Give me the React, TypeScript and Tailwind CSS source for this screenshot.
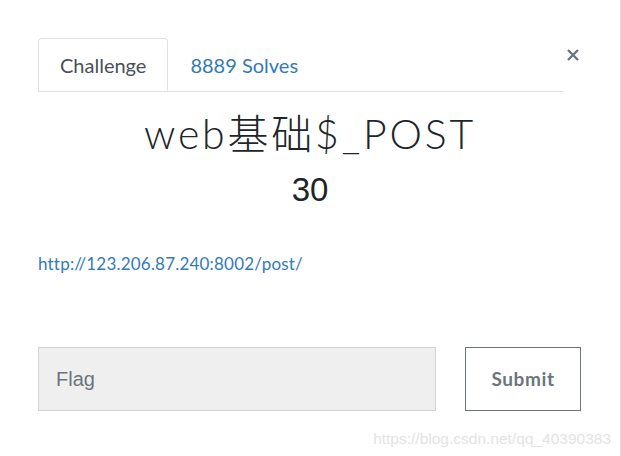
const App = () => {
  return (
    <div className="w-[621px] h-[456px] bg-white border-r border-[#dcdcdc] flex flex-col font-['Lato',sans-serif]">
      {/* header with tabs and close */}
      <div className="flex items-start pl-[38px] pt-[38px]">
        <div className="flex w-[525px] border-b border-[#dee2e6]">
          <div className="h-[53px] px-[21px] flex items-center border border-b-0 border-[#dee2e6] rounded-t-[4px] -mb-px bg-white text-[20px] text-[#495057]">
            Challenge
          </div>
          <div className="h-[53px] px-[22px] flex items-center text-[20px] text-[#337ab7]">
            8889 Solves
          </div>
        </div>
        <button className="ml-[3px] mt-[10px] w-[14px] h-[14px] flex items-center justify-center">
          <svg width="14" height="14" viewBox="0 0 14 14">
            <path d="M2 2 L12 12 M12 2 L2 12" stroke="#6c757d" strokeWidth="2.4" strokeLinecap="butt" />
          </svg>
        </button>
      </div>

      {/* title */}
      <div className="flex flex-col items-center mt-[14px]">
        <h2 className="text-[41px] leading-[56px] font-light tracking-[2.8px] text-[#212529] font-['Lato','Noto_Sans_CJK_SC',sans-serif]">
          web基础$_POST
        </h2>
        <div className="mt-[8px] text-[33px] leading-[40px] text-[#212529] font-['Liberation_Sans',sans-serif]">30</div>
      </div>

      {/* link */}
      <div className="pl-[38px] mt-[42px]">
        <a className="text-[17px] leading-[20px] tracking-[0.2px] text-[#337ab7]">http://123.206.87.240:8002/post/</a>
      </div>

      {/* form */}
      <div className="flex pl-[38px] mt-[71px]">
        <div className="w-[398px] h-[64px] bg-[#efefef] border border-[#ced4da] flex items-center pl-[17px] text-[20px] text-[#6c757d] font-['Liberation_Sans',sans-serif]">
          Flag
        </div>
        <button className="ml-[29px] w-[116px] h-[64px] border border-[#6c757d] text-[19px] font-bold text-[#6c757d] tracking-[0.6px]">
          Submit
        </button>
      </div>

      {/* watermark */}
      <div className="flex justify-end pr-[9px] mt-[18px]">
        <span className="text-[15.5px] leading-[20px] text-[#e3e3e3] font-['Liberation_Sans',sans-serif]">
          https://blog.csdn.net/qq_40390383
        </span>
      </div>
    </div>
  );
};

export default App;
